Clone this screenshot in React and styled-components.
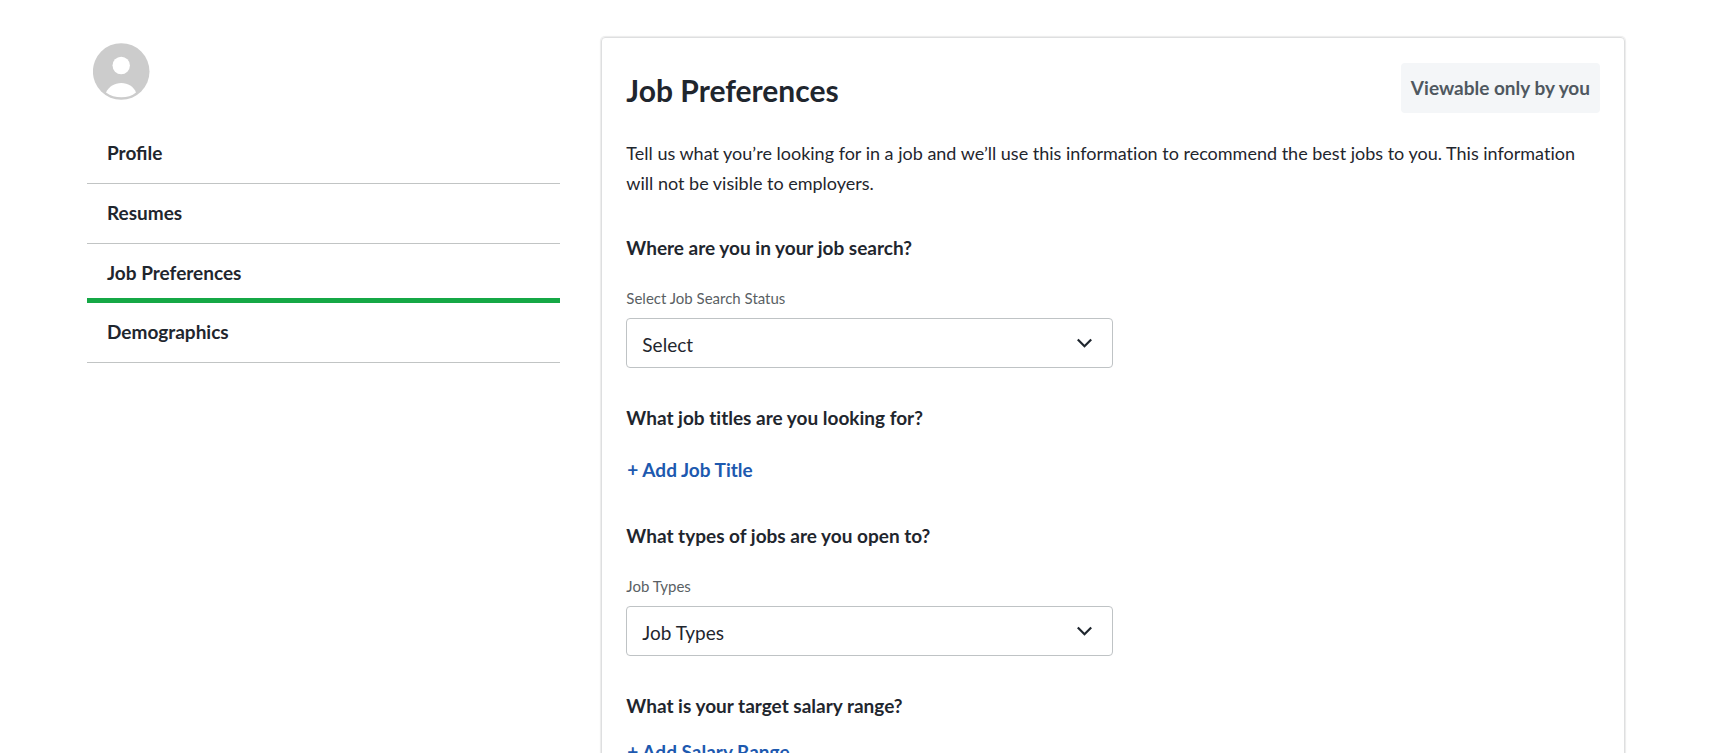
import React from "react";
import styled, { createGlobalStyle } from "styled-components";

const GlobalStyle = createGlobalStyle`
  *, *::before, *::after { box-sizing: border-box; }
  body {
    margin: 0;
    background: #fff;
    color: #1f262e;
    font-family: Lato, "Liberation Sans", sans-serif;
    font-size: 19px;
    line-height: 30px;
  }
`;

const Page = styled.div`
  height: 100vh;
  overflow-y: auto;
  scrollbar-width: none;
`;

const Columns = styled.div`
  display: grid;
  grid-template-columns: 6fr 13fr;
  column-gap: 40px;
  align-items: start;
  padding: 36px 106px 48px 87px;
`;

const Sidebar = styled.aside`
  padding-top: 7px;
`;

const Avatar = styled.svg`
  display: block;
  width: 57px;
  height: 57px;
  margin: 0 0 24px 6px;
`;

const NavList = styled.ul`
  list-style: none;
  margin: 0;
  padding: 0;
`;

const NavLink = styled.a`
  display: block;
  padding: ${(p) => (p.$active ? "14px 20px 10px" : "14px 20px 15px")};
  border-bottom: ${(p) => (p.$active ? "5px solid #15a846" : "1px solid #c1c4c4")};
  color: inherit;
  font-weight: 700;
  text-decoration: none;
`;

const Card = styled.main`
  margin: 1px;
  padding: 25px 24px 64px;
  border: 1px solid #dedfe0;
  border-radius: 4px;
  box-shadow: 0 0 1px 1px rgba(0, 0, 0, 0.08);
`;

const CardHeader = styled.header`
  display: flex;
  justify-content: space-between;
  align-items: flex-start;
  margin-bottom: 25px;
`;

const Title = styled.h1`
  margin: 7px 0 0;
  font-size: 30px;
  line-height: 40px;
  font-weight: 700;
`;

const Badge = styled.span`
  padding: 10px;
  border-radius: 4px;
  background: #f4f6f8;
  color: #4f5860;
  font-weight: 700;
`;

const Intro = styled.p`
  margin: 0 0 35px;
  font-size: 18px;
  font-variant-ligatures: none;
`;

const Section = styled.section`
  margin-bottom: ${(p) => (p.$compact ? "36px" : "35px")};
`;

const Question = styled.h2`
  margin: 0 0 ${(p) => p.$gap || 21}px;
  font-size: 19px;
  line-height: 30px;
  font-weight: 700;
  font-variant-ligatures: none;
`;

const Label = styled.label`
  display: block;
  margin: 0 0 8px;
  padding-top: 2px;
  color: #5a5f64;
  font-size: 15px;
  line-height: 24px;
`;

const SelectBox = styled.div`
  display: grid;
  width: 50%;
  min-width: 280px;
  align-items: center;

  > * { grid-area: 1 / 1; }
`;

const Select = styled.select`
  appearance: none;
  width: 100%;
  height: 50px;
  padding: 3px 48px 0 15px;
  border: 1px solid #bfc3c5;
  border-radius: 4px;
  background: #fff;
  color: inherit;
  font: inherit;
`;

const ChevronIcon = styled.svg`
  justify-self: end;
  width: 16px;
  height: 10px;
  margin-right: 20px;
  pointer-events: none;
`;

const AddButton = styled.button`
  display: block;
  padding: 0 1px;
  border: 0;
  background: none;
  color: #1d59af;
  font: inherit;
  font-weight: 700;
  cursor: pointer;
`;

const NAV = ["Profile", "Resumes", "Job Preferences", "Demographics"];

function SelectField({ id, label, value }) {
  return (
    <>
      <Label htmlFor={id}>{label}</Label>
      <SelectBox>
        <Select id={id} defaultValue="">
          <option value="">{value}</option>
        </Select>
        <ChevronIcon viewBox="0 0 16 10" aria-hidden="true">
          <path d="M.8 1.500 7.500 8.200l6.700-6.700" fill="none" stroke="#1f262e" strokeWidth="2.200" />
        </ChevronIcon>
      </SelectBox>
    </>
  );
}

export default function App() {
  return (
    <Page>
      <GlobalStyle />
      <Columns>
        <Sidebar>
          <Avatar viewBox="0 0 57 57" role="img" aria-label="Your photo">
            <circle cx="28.200" cy="28.500" r="28.300" fill="#ccc" />
            <circle cx="28.200" cy="22.500" r="8.700" fill="#fff" />
            <path d="M13 49.500C16 43.500 21.500 40 28.300 40s12.200 3.500 14.700 9.500C39 53 34 54.300 28.300 54.300S17.500 53 13 49.500Z" fill="#fff" />
          </Avatar>
          <nav aria-label="Account">
            <NavList>
              {NAV.map((item) => (
                <li key={item}>
                  <NavLink
                    href="#"
                    $active={item === "Job Preferences"}
                    aria-current={item === "Job Preferences" ? "page" : undefined}
                  >
                    {item}
                  </NavLink>
                </li>
              ))}
            </NavList>
          </nav>
        </Sidebar>
        <Card>
          <CardHeader>
            <Title>Job Preferences</Title>
            <Badge>Viewable only by you</Badge>
          </CardHeader>
          <Intro>
            Tell us what you’re looking for in a job and we’ll use this information to recommend the
            best jobs to you. This information will not be visible to employers.
          </Intro>
          <Section>
            <Question>Where are you in your job search?</Question>
            <SelectField id="search-status" label="Select Job Search Status" value="Select" />
          </Section>
          <Section $compact>
            <Question $gap={22}>What job titles are you looking for?</Question>
            <AddButton type="button">+ Add Job Title</AddButton>
          </Section>
          <Section>
            <Question>What types of jobs are you open to?</Question>
            <SelectField id="job-types" label="Job Types" value="Job Types" />
          </Section>
          <Section $compact>
            <Question $gap={16}>What is your target salary range?</Question>
            <AddButton type="button">+ Add Salary Range</AddButton>
          </Section>
        </Card>
      </Columns>
    </Page>
  );
}
